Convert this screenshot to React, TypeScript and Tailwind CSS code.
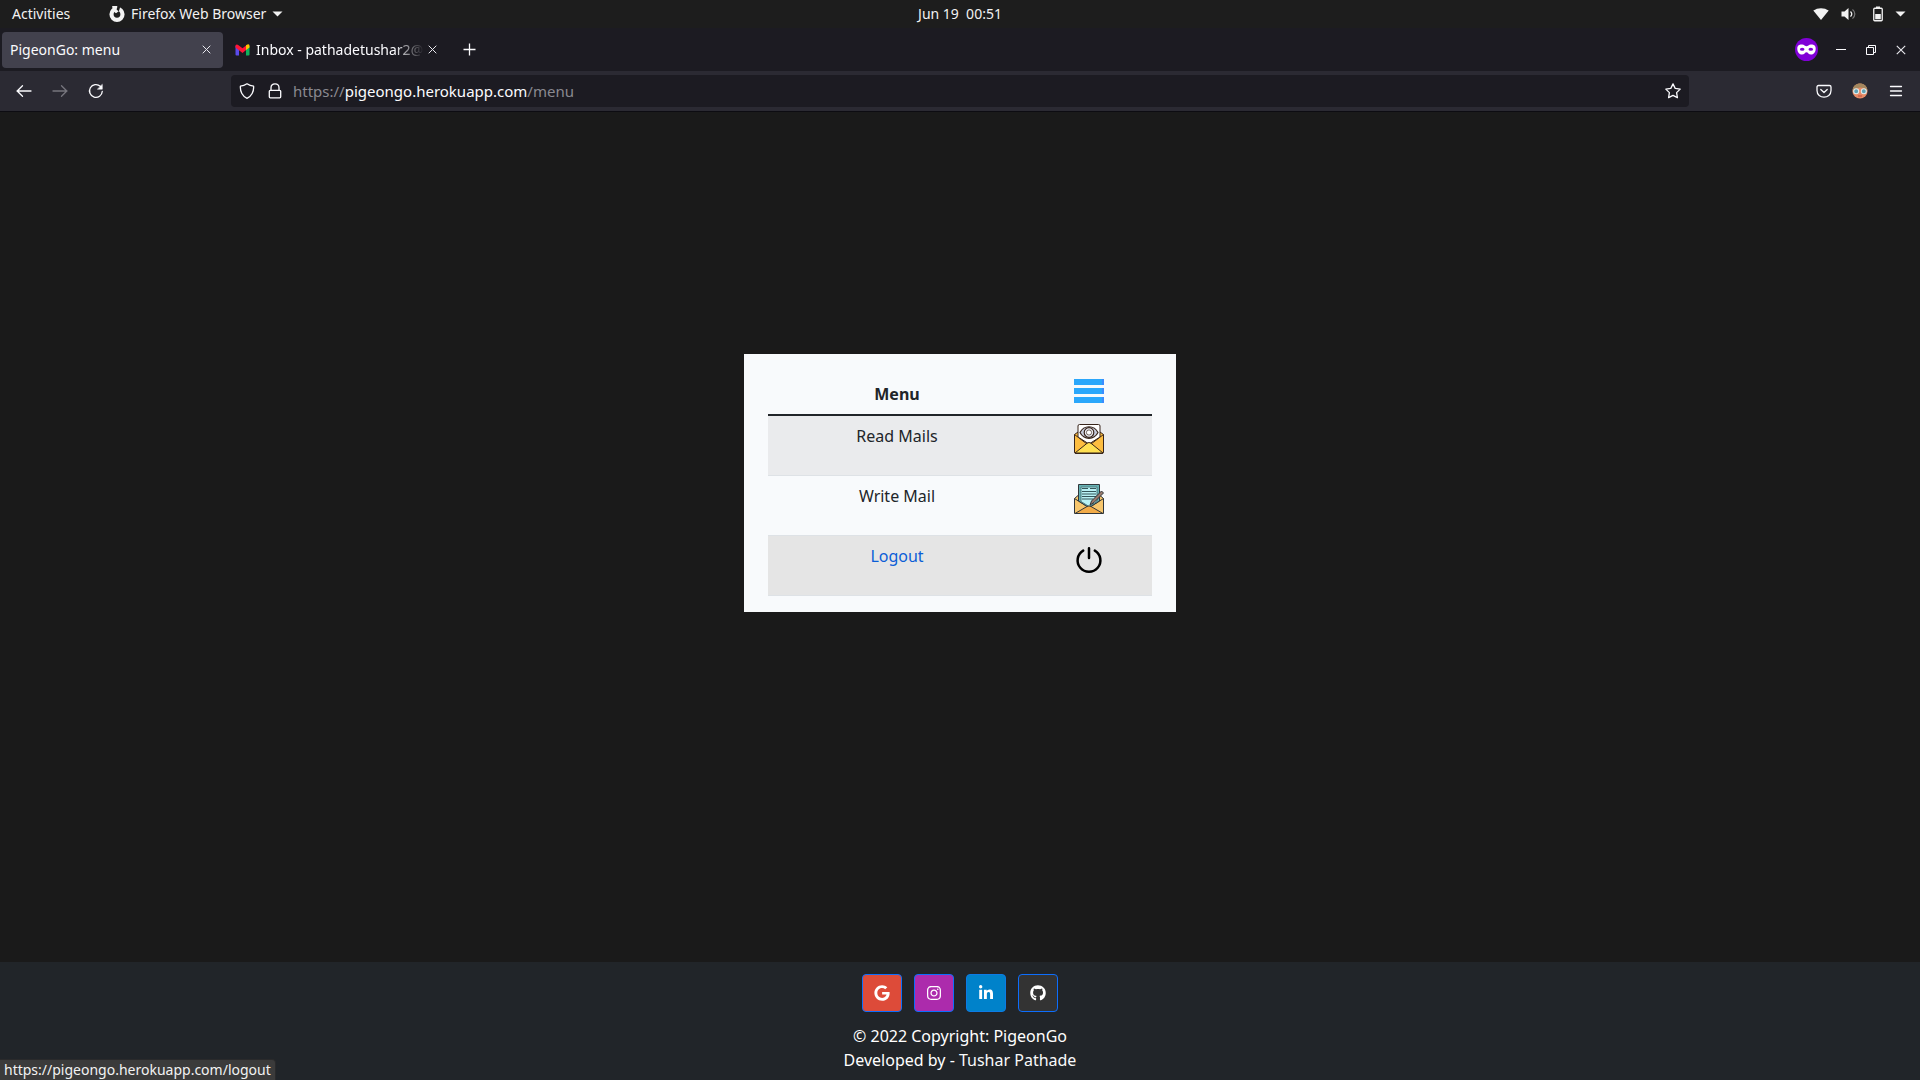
import type { ReactNode } from "react";
import { FaGithub, FaGoogle, FaInstagram, FaLinkedinIn } from "react-icons/fa";

function TopBar() {
  return (
    <header className="grid h-7 grid-cols-3 items-center bg-[#1d1d1d] px-3 text-sm text-[#f2f2f2]">
      <div className="flex items-center">
        <button className="w-[97px] text-left">Activities</button>
        <button className="flex items-center gap-1">
          <svg width="16" height="16" viewBox="0 0 16 16" fill="none" aria-hidden="true">
            <circle cx="8" cy="8.3" r="5.5" stroke="#f2f2f2" strokeWidth="4.2" />
            <path d="M3 0 8.6 0 7.4 3.6 9.4 5.6 7 7.3 4.2 5.2Z" fill="#f2f2f2" />
            <path d="M8.6 0 11.5 0 9.8 5.4 7.6 3.4Z" fill="#1d1d1d" />
            <path d="M0 0H3.4L1.6 3 0 5Z" fill="#1d1d1d" />
          </svg>
          <span className="mr-0.5 ml-0.5">Firefox Web Browser</span>
          <Caret />
        </button>
      </div>
      <time className="text-center text-sm whitespace-pre">Jun 19  00:51</time>
      <div className="flex items-center justify-end gap-3 pr-0.5">
        <svg width="16" height="14" viewBox="0 0 16 14" fill="#f2f2f2" aria-hidden="true">
          <path d="M0.3 3.6C4.5 0.3 11.5 0.3 15.7 3.6L8 13Z" />
        </svg>
        <svg width="16" height="14" viewBox="0 0 16 14" fill="none" aria-hidden="true">
          <path d="M0.5 4.5H3.5L7.5 1V13L3.5 9.6H0.5Z" fill="#f2f2f2" />
          <path d="M9.5 4.5C11 6 11 8 9.5 9.6" stroke="#f2f2f2" strokeWidth="1.3" />
          <path d="M11.5 2.5C14.6 5 14.6 9 11.5 11.6" stroke="#777" strokeWidth="1.2" />
        </svg>
        <svg className="ml-1" width="10" height="16" viewBox="0 0 10 16" fill="none" aria-hidden="true">
          <rect x="0.75" y="2.25" width="8.5" height="12.5" rx="1" stroke="#f2f2f2" strokeWidth="1.3" />
          <path d="M3 0.5H7V2H3ZM2.2 8H7.8V13.3H2.2Z" fill="#f2f2f2" />
        </svg>
        <Caret />
      </div>
    </header>
  );
}

function Caret() {
  return (
    <svg width="11" height="6" viewBox="0 0 11 6" aria-hidden="true">
      <path d="M0.5 0.5H10.5L5.5 5.5Z" fill="#f2f2f2" />
    </svg>
  );
}

function Cross({ size = 9 }: { size?: number }) {
  return (
    <svg width={size} height={size} viewBox="0 0 9 9" stroke="#e8e8ee" strokeWidth="1" aria-hidden="true">
      <path d="M0.7 0.7 8.3 8.3M8.3 0.7 0.7 8.3" />
    </svg>
  );
}

function TabStrip() {
  return (
    <div className="flex h-[43px] items-center bg-[#1c1b22] px-0.5 text-sm text-[#fbfbfe]">
      <div className="flex h-9 w-[221px] items-center justify-between rounded bg-[#42414d] pr-3 pl-2">
        <span>PigeonGo: menu</span>
        <button aria-label="Close PigeonGo tab"><Cross /></button>
      </div>
      <div className="flex h-9 w-[220px] items-center pr-1.5 pl-3">
        <svg className="shrink-0" width="15" height="12" viewBox="0 0 15 12" aria-hidden="true">
          <path d="M0.5 1.5 4 4.5V11.5H1.5Q0.5 11.5 0.5 10.5Z" fill="#5a4bea" />
          <path d="M11 4.5 14.5 1.5V10.5Q14.5 11.5 13.5 11.5H11Z" fill="#0fb25c" />
          <path d="M0.5 1.5Q1.5-0.3 3.2 0.9L7.5 4.3 11.4 1.2V5.8L7.5 9 0.5 3.5Z" fill="#ff1537" />
          <path d="M11 1.3Q14.5-1.2 14.5 2V3.5L11 6Z" fill="#ffc400" />
        </svg>
        <span className="ml-1.5 w-[168px] overflow-hidden whitespace-nowrap [mask-image:linear-gradient(to_right,black_82%,transparent)]">
          Inbox - pathadetushar2@
        </span>
        <button className="ml-1" aria-label="Close Inbox tab"><Cross /></button>
      </div>
      <button className="ml-5" aria-label="New tab">
        <svg width="13" height="13" viewBox="0 0 13 13" stroke="#fbfbfe" strokeWidth="1.3" aria-hidden="true">
          <path d="M6.5 0.5V12.5M0.5 6.5H12.5" />
        </svg>
      </button>
      <div className="ml-auto flex items-center gap-5 pr-3">
        <svg className="-mr-0.5" width="23" height="23" viewBox="0 0 23 23" aria-hidden="true">
          <circle cx="11.5" cy="11.5" r="11.5" fill="#8000d7" />
          <path d="M2.3 10.5C2.3 6.8 5.2 6.2 7.2 6.5 9 6.7 10.3 8.3 11.5 8.3S14 6.7 15.8 6.5C17.8 6.2 20.7 6.8 20.7 10.5 20.7 14.5 18.3 16.5 16 16.5 13.6 16.5 13 14.2 11.5 14.2S9.4 16.5 7 16.5C4.7 16.5 2.3 14.5 2.3 10.5Z" fill="#fff" />
          <ellipse cx="7.2" cy="11.3" rx="2.3" ry="1.5" fill="#8000d7" />
          <ellipse cx="15.8" cy="11.3" rx="2.3" ry="1.5" fill="#8000d7" />
        </svg>
        <button aria-label="Minimize">
          <svg width="10" height="11" viewBox="0 0 10 11" aria-hidden="true"><path d="M0 5.5H10" stroke="#fbfbfe" /></svg>
        </button>
        <button aria-label="Restore">
          <svg width="10" height="10" viewBox="0 0 10 10" fill="none" stroke="#fbfbfe" aria-hidden="true">
            <path d="M0.5 2.5H7.5V9.5H0.5ZM2.5 2.5V0.5H9.5V7.5H7.5" />
          </svg>
        </button>
        <button aria-label="Close window"><Cross size={10} /></button>
      </div>
    </div>
  );
}

function NavButton({ label, children, className = "" }: { label: string; children: ReactNode; className?: string }) {
  return (
    <button aria-label={label} className={className}>
      <svg width="16" height="16" viewBox="0 0 16 16" fill="none" stroke="currentColor" strokeWidth="1.3" strokeLinecap="round" strokeLinejoin="round" aria-hidden="true">
        {children}
      </svg>
    </button>
  );
}

function Toolbar() {
  return (
    <nav className="flex h-[41px] items-center border-b border-[#0d0c12] bg-[#2b2a33] px-4 text-[#fbfbfe]">
      <div className="flex w-[215px] gap-5">
        <NavButton label="Back"><path d="M1 8H15M6.5 2.8 1.2 8 6.5 13.2" /></NavButton>
        <NavButton label="Forward" className="text-[#77767e]"><path d="M15 8H1M9.5 2.8 14.8 8 9.5 13.2" /></NavButton>
        <NavButton label="Reload">
          <path d="M14.3 8.3A6.4 6.4 0 1 1 12.3 3.3L13.5 4.4" />
          <path d="M14.3 1.6V6.2H9.7Z" fill="currentColor" strokeWidth="0.5" />
        </NavButton>
      </div>
      <div className="flex h-8 flex-1 items-center rounded bg-[#1c1b22] px-2">
        <NavButton label="Tracking protection"><path d="M8 0.8Q11 3 14.6 3.2C15 8.5 12.5 13.5 8 15.3 3.5 13.5 1 8.5 1.4 3.2Q5 3 8 0.8Z" /></NavButton>
        <NavButton label="Site security" className="ml-3">
          <path d="M4 7V4.8C4-0.5 12-0.5 12 4.8V7M3.3 7.3H12.7Q13.7 7.3 13.7 8.3V13.8Q13.7 14.8 12.7 14.8H3.3Q2.3 14.8 2.3 13.8V8.3Q2.3 7.3 3.3 7.3Z" />
        </NavButton>
        <a href="https://pigeongo.herokuapp.com/menu" className="ml-2.5 flex-1 text-[15px] text-[#8a8990]">
          https://<span className="text-[#fbfbfe]">pigeongo.herokuapp.com</span>/menu
        </a>
        <NavButton label="Bookmark"><path d="M8 0.9 10.2 5.4 15.2 6.1 11.6 9.6 12.4 14.6 8 12.3 3.6 14.6 4.4 9.6 0.8 6.1 5.8 5.4Z" /></NavButton>
      </div>
      <div className="ml-[127px] flex items-center gap-5">
        <NavButton label="Pocket"><path d="M2.5 2.5H13.5Q15 2.5 15 4V7.5C15 16.3 1 16.3 1 7.5V4Q1 2.5 2.5 2.5ZM4.8 6.5 8 9.5 11.2 6.5" /></NavButton>
        <button aria-label="Account">
          <svg width="16" height="16" viewBox="0 0 16 16" aria-hidden="true">
            <circle cx="8" cy="8" r="7.6" fill="#e78b66" />
            <path d="M0.6 7.5C0.6-2 15.4-2 15.4 7.5L12 5 8 4.5 3 6Z" fill="#a4875f" />
            <circle cx="4.2" cy="8.2" r="2.5" fill="#5fa2b5" stroke="#e2ecec" strokeWidth="1.1" />
            <circle cx="11.8" cy="8.2" r="2.5" fill="#5fa2b5" stroke="#e2ecec" strokeWidth="1.1" />
            <path d="M6 13H10" stroke="#bd4c40" />
          </svg>
        </button>
        <NavButton label="Application menu"><path d="M2.5 3.5H13.5M2.5 8H13.5M2.5 12.5H13.5" /></NavButton>
      </div>
    </nav>
  );
}

function BarsIcon() {
  return (
    <svg width="30" height="30" viewBox="0 0 30 30" aria-hidden="true">
      <path d="M0 3H30V9H0ZM0 12H30V18H0ZM0 21H30V27H0Z" fill="#2ba7fb" />
      <path d="M28 3H30V9H28ZM28 12H30V18H28ZM28 21H30V27H28Z" fill="#3c8cff" />
    </svg>
  );
}

function ReadMailIcon() {
  return (
    <svg width="30" height="30" viewBox="0 0 30 30" stroke="#38251b" strokeLinejoin="round" aria-hidden="true">
      <path d="M0.5 10.5 4 8H26L29.5 10.5V28Q29.5 29.5 28 29.5H2Q0.5 29.5 0.5 28Z" fill="#fdbd40" />
      <path d="M0.5 10.5 13 20H17L29.5 10.5" fill="none" />
      <path d="M4 13V2Q4 0.5 5.5 0.5H24.5Q26 0.5 26 2V13L15 20Z" fill="#fff" />
      <path d="M1 29 13 19.3Q15 17.6 17 19.3L29 29Z" fill="#ffe052" />
      <path d="M6 8.5C10 0.8 20 0.8 24 8.5 20 16.2 10 16.2 6 8.5Z" fill="#c6cbdb" strokeWidth="1.2" />
      <circle cx="15" cy="8.5" r="4.8" fill="#eef0f7" strokeWidth="1.2" />
      <circle cx="15" cy="8.5" r="2.6" fill="#fff" strokeWidth="0.7" />
    </svg>
  );
}

function WriteMailIcon() {
  return (
    <svg width="30" height="30" viewBox="0 0 30 30" stroke="#31363a" strokeLinejoin="round" aria-hidden="true">
      <path d="M0.5 14.5 4 11.5H26L29.5 14.5V29.5H0.5Z" fill="#f7c66d" />
      <path d="M0.5 14.5 13 22.5H17L29.5 14.5" fill="none" />
      <path d="M4.5 17V0.5H25.5V17L15 23.5Z" fill="#66b1b3" />
      <path d="M7 17.5V3H23V17.5L15 22.5Z" fill="#b9f2f5" stroke="#4e7d80" />
      <path d="M8 4.5H14M16 4.5H22M8 7.5H22M8 10H22M8 12.5H22M8 15H19" stroke="#35565a" />
      <path d="M1 29.5 13 22.5Q15 21.3 17 22.5L29 29.5Z" fill="#f2ab48" />
      <path d="M16 21 17.5 17 27.5 7 29.5 9 20 18.5Z" fill="#9a796c" />
    </svg>
  );
}

function PowerIcon() {
  return (
    <svg width="30" height="30" viewBox="0 0 30 30" fill="none" stroke="#000" strokeWidth="2.5" strokeLinecap="round" aria-hidden="true">
      <path d="M15 4.2V14M9.2 6.6A11.4 11.4 0 1 0 20.8 6.6" />
    </svg>
  );
}

function MenuRow({ icon, children, className }: { icon: ReactNode; children: ReactNode; className: string }) {
  return (
    <tr className={`border-b border-[#dee2e6] align-top ${className}`}>
      <td className="px-2 pt-2 pb-[27px]">{children}</td>
      <td className="px-2 pt-2"><div className="flex justify-center">{icon}</div></td>
    </tr>
  );
}

function MenuCard() {
  return (
    <section className="w-[432px] bg-slate-50 px-6 py-4 text-base text-[#212529]">
      <table className="w-full table-fixed border-collapse text-center leading-6">
        <thead>
          <tr className="border-b-2 border-[#212529]">
            <th className="w-[258px] px-2 pt-3 pb-2 align-bottom">Menu</th>
            <th className="px-2 pt-[5px] pb-2"><div className="flex justify-center"><BarsIcon /></div></th>
          </tr>
        </thead>
        <tbody>
          <MenuRow icon={<ReadMailIcon />} className="bg-[#eaebed]"><a href="#read">Read Mails</a></MenuRow>
          <MenuRow icon={<WriteMailIcon />} className=""><a href="#write">Write Mail</a></MenuRow>
          <MenuRow icon={<PowerIcon />} className="bg-[#e5e5e5]"><a href="#logout" className="text-[#0b5ed7]">Logout</a></MenuRow>
        </tbody>
      </table>
    </section>
  );
}

const socials = [
  { name: "Google", Icon: FaGoogle, style: "bg-[#dd4b39] border-[#0d6efd]" },
  { name: "Instagram", Icon: FaInstagram, style: "bg-[#ac2bac] border-[#0d6efd]" },
  { name: "LinkedIn", Icon: FaLinkedinIn, style: "bg-[#0082ca] border-[#0d7be5]" },
  { name: "GitHub", Icon: FaGithub, style: "bg-[#333333] border-[#0d6efd]" },
];

function Footer() {
  return (
    <footer className="flex h-[118px] flex-col items-center bg-[#212529] pt-3 text-base text-white">
      <div className="mb-3 flex gap-3">
        {socials.map(({ name, Icon, style }) => (
          <a key={name} href={`#${name}`} aria-label={name} className={`flex h-[38px] w-10 items-center justify-center rounded border ${style}`}>
            <Icon size={16} />
          </a>
        ))}
      </div>
      <p className="leading-6">© 2022 Copyright: PigeonGo</p>
      <p className="leading-6">Developed by - <a href="#author" className="text-[#f8f9fa]">Tushar Pathade</a></p>
    </footer>
  );
}

export default function App() {
  return (
    <div className="relative flex min-h-screen flex-col bg-[#1a1a1a] font-['Noto_Sans',sans-serif]">
      <TopBar />
      <TabStrip />
      <Toolbar />
      <main className="flex flex-1 items-center justify-center pb-[108px]">
        <MenuCard />
      </main>
      <Footer />
      <div role="status" className="absolute bottom-0 left-0 h-[21px] rounded-tr border-t border-r border-[#2a2a2b] bg-[#3b3b3b] px-1 text-sm leading-5 text-[#f2f2f2]">
        https://pigeongo.herokuapp.com/logout
      </div>
    </div>
  );
}
